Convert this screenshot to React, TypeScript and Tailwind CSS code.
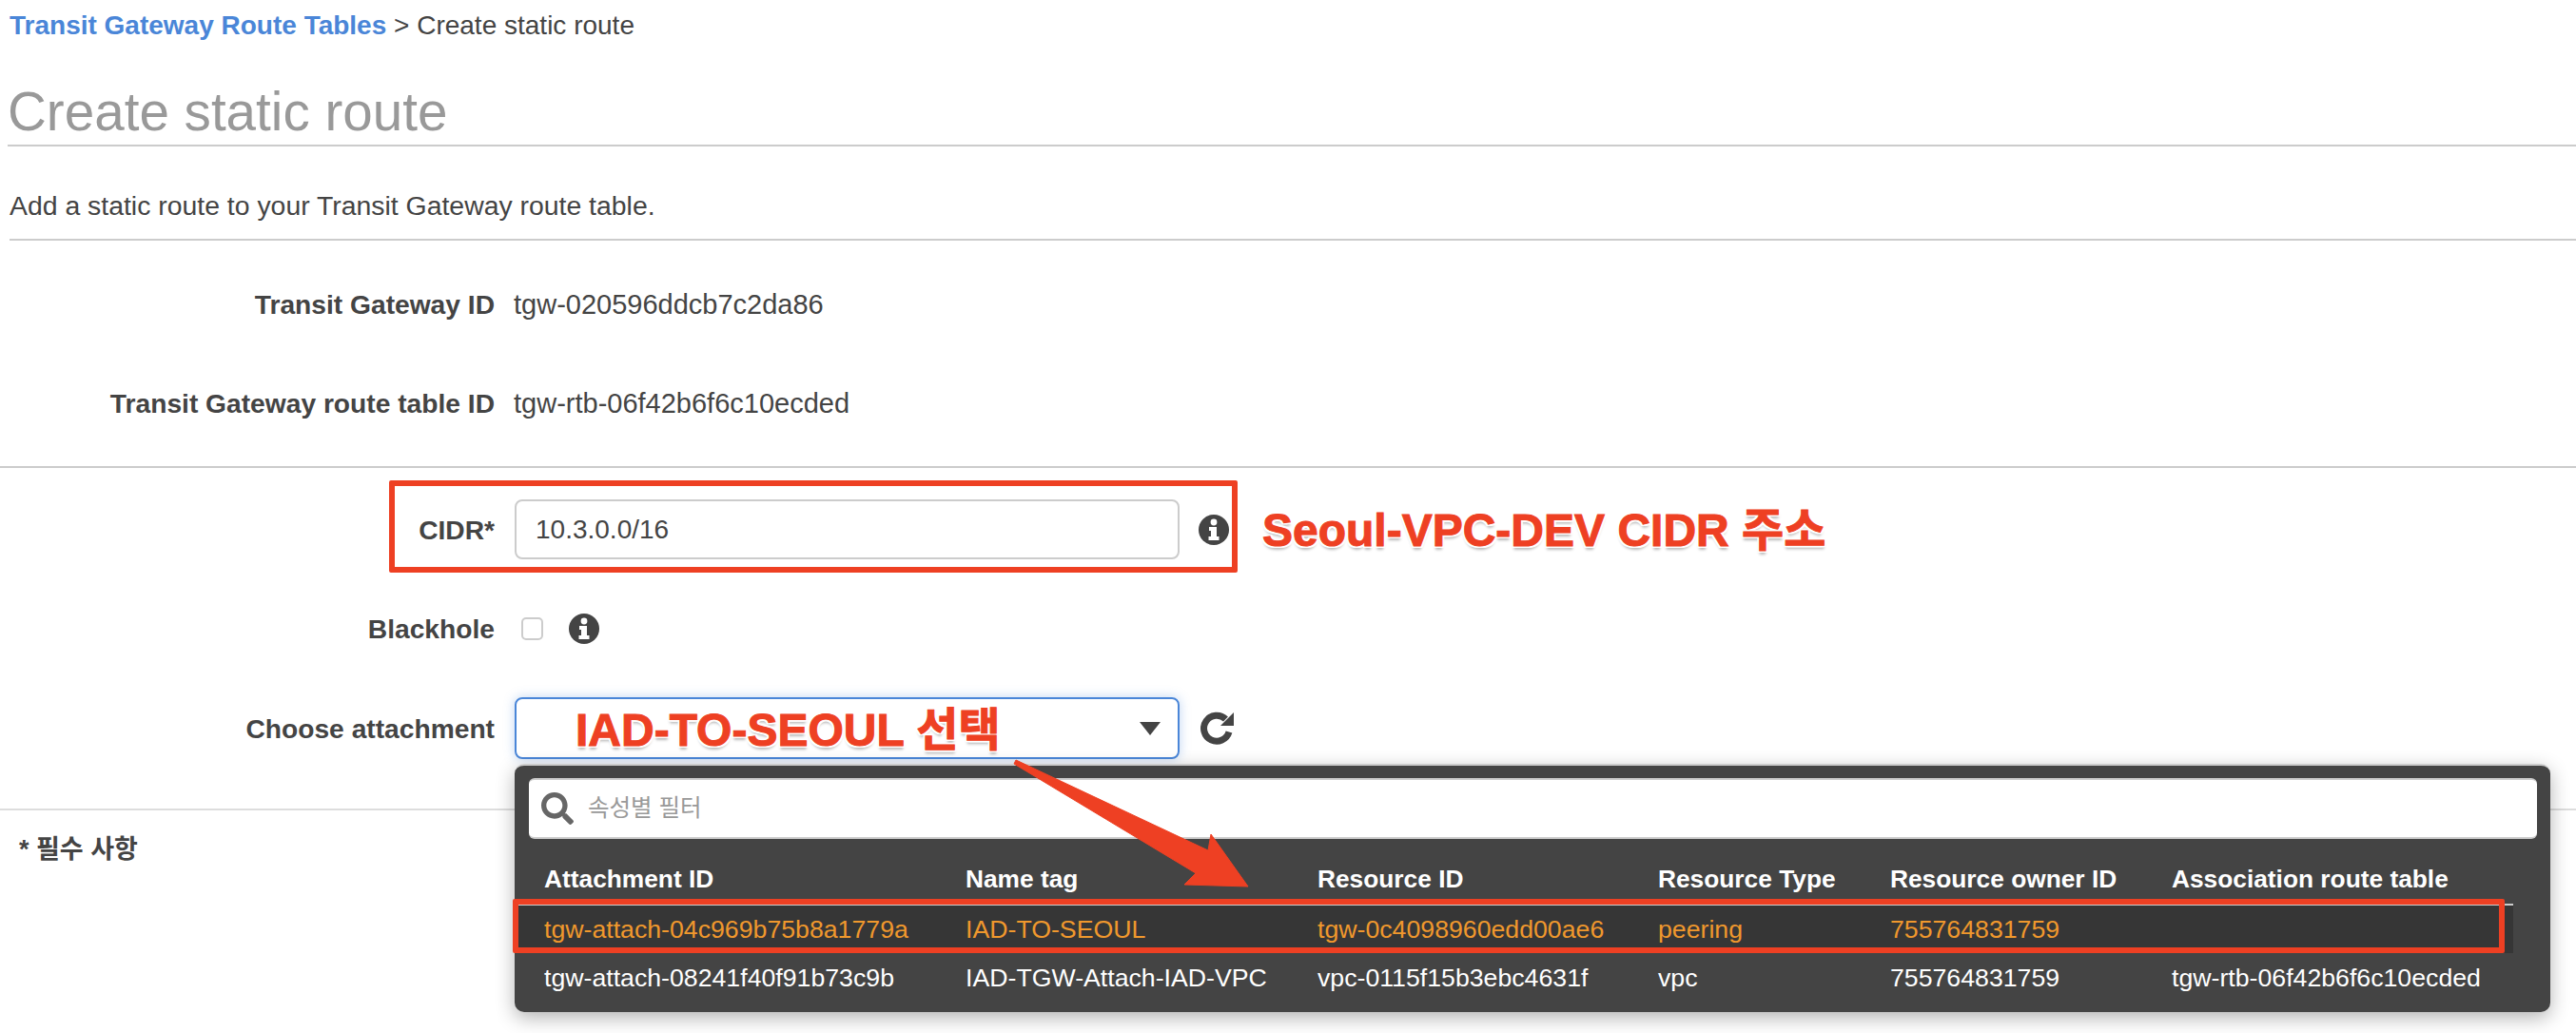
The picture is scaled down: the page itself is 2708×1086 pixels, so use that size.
import { FaSearch } from "react-icons/fa";

const font = "font-['Liberation_Sans','Noto_Sans_CJK_KR',sans-serif]";

const InfoIcon = () => (
    <svg viewBox="0 0 32 32" className="w-8 h-8 shrink-0">
        <circle cx="16" cy="16" r="16" fill="#444" />
        <circle cx="16" cy="8" r="3.4" fill="#fff" />
        <path d="M11 13h8v10h2.5v4h-11v-4H13v-6h-2z" fill="#fff" />
    </svg>
);

const RefreshIcon = () => (
    <svg viewBox="0 0 36 36" className="ml-[22px] w-[36px] h-[36px] shrink-0">
        <path d="M26.5 8A13.5 13.5 0 1 0 30 21.5" fill="none" stroke="#444" strokeWidth="7" />
        <path d="M35 1v14H21z" fill="#444" />
    </svg>
);

const columns = [
    { label: "Attachment ID", width: "w-[443px]" },
    { label: "Name tag", width: "w-[370px]" },
    { label: "Resource ID", width: "w-[358px]" },
    { label: "Resource Type", width: "w-[244px]" },
    { label: "Resource owner ID", width: "w-[296px]" },
    { label: "Association route table", width: "w-[340px]" },
];

const rows = [
    { cells: ["tgw-attach-04c969b75b8a1779a", "IAD-TO-SEOUL", "tgw-0c4098960edd00ae6", "peering", "755764831759", ""], selected: true },
    { cells: ["tgw-attach-08241f40f91b73c9b", "IAD-TGW-Attach-IAD-VPC", "vpc-0115f15b3ebc4631f", "vpc", "755764831759", "tgw-rtb-06f42b6f6c10ecded"], selected: false },
];

function Row({ label, children, className }: { label: string; children: React.ReactNode; className: string }) {
    return (
        <div className={`flex items-center ${className}`}>
            <div className="w-[520px] shrink-0 text-right font-bold text-[28.2px]">{label}</div>
            {children}
        </div>
    );
}

const annotation = "font-bold text-[#ee4023] [-webkit-text-stroke:1px_#ee4023] [text-shadow:-2px_0_0_#fff,2px_0_0_#fff,0_-2px_0_#fff,0_2px_0_#fff,2px_2px_0_#fff,-2px_2px_0_#fff,2px_-2px_0_#fff,-2px_-2px_0_#fff,0_4px_3px_#bbb]";

export default function App() {
    return (
        <div className={`relative w-[2708px] h-[1086px] overflow-hidden bg-white text-[28px] leading-[30px] text-[#444] ${font}`}>
            <div className="pl-[10px] pt-[12px] h-[60px]">
                <span className="font-bold text-[#4a86d8]">Transit Gateway Route Tables</span>
                <span> &gt; Create static route</span>
            </div>

            <h1 className="pl-[8px] h-[92px] pt-[25px] text-[56.6px] leading-[66px] text-[#999]">Create static route</h1>
            <div className="ml-[8px] h-[2px] bg-[#ccc]" />

            <p className="pl-[10px] pt-[47px] h-[97px] text-[28.4px]">Add a static route to your Transit Gateway route table.</p>
            <div className="ml-[10px] h-[2px] bg-[#ccc]" />

            <Row label="Transit Gateway ID" className="mt-[52px] h-[30px]">
                <span className="ml-[20px] text-[29px]">tgw-020596ddcb7c2da86</span>
            </Row>
            <Row label="Transit Gateway route table ID" className="mt-[74px] h-[30px]">
                <span className="ml-[20px] text-[29px]">tgw-rtb-06f42b6f6c10ecded</span>
            </Row>
            <div className="mt-[51px] h-[2px] bg-[#ccc]" />

            <Row label="CIDR*" className="mt-[33px]">
                <div className="ml-[21px] w-[699px] h-[63px] flex items-center pl-[20px] border-2 border-[#ccc] rounded-[8px]">10.3.0.0/16</div>
                <div className="ml-[20px]"><InfoIcon /></div>
            </Row>

            <Row label="Blackhole" className="mt-[56px] h-[34px]">
                <div className="ml-[28px] w-[23px] h-[24px] border-2 border-[#ccc] rounded-[5px]" />
                <div className="ml-[27px]"><InfoIcon /></div>
            </Row>

            <Row label="Choose attachment" className="mt-[55px]">
                <div className="relative ml-[21px] w-[699px] h-[65px] flex items-center justify-end pr-[18px] border-2 border-[#4a86d8] rounded-[8px] shadow-[0_0_12px_rgba(74,134,216,0.35)]">
                    <svg viewBox="0 0 22 14" className="w-[22px] h-[14px]"><path d="M0 0h22L11 14z" fill="#444" /></svg>
                </div>
                <RefreshIcon />
            </Row>

            <div className="mt-[52px] h-[2px] bg-[#ddd]" />
            <div className="pl-[20px] pt-[26px] font-bold text-[27px]">* 필수 사항</div>

            {/* dropdown over the form */}
            <div className="absolute left-[541px] top-[803px] w-[2140px] h-[261px] bg-[#444] border-t-2 border-[#ccc] rounded-[10px] shadow-[0_6px_20px_rgba(0,0,0,0.3)] text-white">
                <div className="mx-[15px] mt-[13px] h-[64px] w-[2111px] flex items-center bg-white border-t-2 border-b-2 border-[#ccc] rounded-[6px]">
                    <FaSearch className="ml-[13px] w-[34px] h-[34px] text-[#666]" />
                    <span className="ml-[15px] text-[24.5px] text-[#999]">속성별 필터</span>
                </div>
                <div className="flex pl-[31px] mt-[27px] h-[36px] font-bold text-[26.3px]">
                    {columns.map((col) => (
                        <div key={col.label} className={`${col.width} shrink-0 whitespace-nowrap`}>{col.label}</div>
                    ))}
                </div>
                {rows.map((row) => (
                    <div key={row.cells[0]} className={`flex items-center pl-[31px] whitespace-nowrap text-[26.7px] ${row.selected ? "h-[52px] mt-[5px] w-[2101px] bg-[#363636] text-[#f0982d] border-t-2 border-[#ccc]" : "h-[52px]"}`}>
                        {row.cells.map((cell, i) => (
                            <div key={i} className={`${columns[i].width} shrink-0`}>{cell}</div>
                        ))}
                    </div>
                ))}
            </div>

            {/* red annotations drawn on top of the screenshot */}
            <div className="absolute left-[409px] top-[505px] w-[892px] h-[97px] border-[6px] border-[#ee4023] rounded-[2px]" />
            <div className={`absolute left-[1327px] top-[533px] text-[48px] leading-[50px] whitespace-nowrap ${annotation}`}>Seoul-VPC-DEV CIDR 주소</div>
            <div className={`absolute left-[605px] top-[743px] text-[48px] leading-[50px] whitespace-nowrap ${annotation}`}>IAD-TO-SEOUL 선택</div>
            <div className="absolute left-[539px] top-[945px] w-[2094px] h-[57px] border-[6px] border-[#ee4023] rounded-[2px]" />
            <svg className="absolute left-0 top-0 w-[2708px] h-[1086px] pointer-events-none" viewBox="0 0 2708 1086">
                <path d="M1068 799L1270 894L1273 877L1312 932L1245 930L1257 918L1066 803z" fill="#ee4023" stroke="#ee4023" strokeWidth="1" strokeLinejoin="round" />
            </svg>
        </div>
    );
}
